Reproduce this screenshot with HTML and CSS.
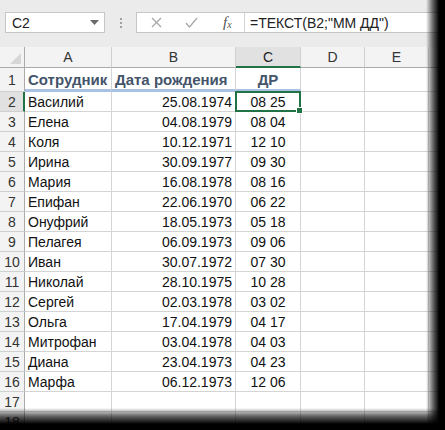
FILE: index.html
```html
<!DOCTYPE html>
<html>
<head>
<meta charset="utf-8">
<link rel="stylesheet" href="styles.css">
</head>
<body>
<div class="screen">
  <div class="toolbar">
    <div class="namebox">
      <span class="nb-text">C2</span>
      <svg class="nb-arrow" width="9" height="5" viewBox="0 0 9 5"><path d="M0 0h9L4.5 5z" fill="#6a6a6a"/></svg>
    </div>
    <div class="grip"><i></i><i></i><i></i></div>
    <div class="fbar">
      <div class="fbtns">
        <svg class="ficon" width="11" height="11" viewBox="0 0 11 11"><path d="M1 1L10 10M10 1L1 10" stroke="#a8a8a8" stroke-width="1.3" fill="none"/></svg>
        <svg class="ficon" width="13" height="11" viewBox="0 0 13 11"><path d="M1 6L4.5 10L12 1" stroke="#a8a8a8" stroke-width="1.3" fill="none"/></svg>
        <span class="fx">f<sub>x</sub></span>
      </div>
      <div class="ftext">=ТЕКСТ(B2;"ММ ДД")</div>
    </div>
  </div>
  <div class="sheet">
    <div class="corner"><svg width="11" height="11" viewBox="0 0 11 11"><path d="M11 0V11H0z" fill="#d7d7d7"/></svg></div>
    <div class="ch">A</div><div class="ch">B</div><div class="ch sel">C</div><div class="ch">D</div><div class="ch">E</div><div class="ch"></div>

    <div class="rh r1">1</div><div class="c hd">Сотрудник</div><div class="c hd">Дата рождения</div><div class="c hd ctr">ДР</div><div class="c r1"></div><div class="c r1"></div><div class="c r1"></div>

    <div class="rh rsel">2</div><div class="c">Василий</div><div class="c num">25.08.1974</div><div class="c ctr active">08 25<span class="handle"></span></div><div class="c"></div><div class="c"></div><div class="c"></div>
    <div class="rh">3</div><div class="c">Елена</div><div class="c num">04.08.1979</div><div class="c ctr">08 04</div><div class="c"></div><div class="c"></div><div class="c"></div>
    <div class="rh">4</div><div class="c">Коля</div><div class="c num">10.12.1971</div><div class="c ctr">12 10</div><div class="c"></div><div class="c"></div><div class="c"></div>
    <div class="rh">5</div><div class="c">Ирина</div><div class="c num">30.09.1977</div><div class="c ctr">09 30</div><div class="c"></div><div class="c"></div><div class="c"></div>
    <div class="rh">6</div><div class="c">Мария</div><div class="c num">16.08.1978</div><div class="c ctr">08 16</div><div class="c"></div><div class="c"></div><div class="c"></div>
    <div class="rh">7</div><div class="c">Епифан</div><div class="c num">22.06.1970</div><div class="c ctr">06 22</div><div class="c"></div><div class="c"></div><div class="c"></div>
    <div class="rh">8</div><div class="c">Онуфрий</div><div class="c num">18.05.1973</div><div class="c ctr">05 18</div><div class="c"></div><div class="c"></div><div class="c"></div>
    <div class="rh">9</div><div class="c">Пелагея</div><div class="c num">06.09.1973</div><div class="c ctr">09 06</div><div class="c"></div><div class="c"></div><div class="c"></div>
    <div class="rh">10</div><div class="c">Иван</div><div class="c num">30.07.1972</div><div class="c ctr">07 30</div><div class="c"></div><div class="c"></div><div class="c"></div>
    <div class="rh">11</div><div class="c">Николай</div><div class="c num">28.10.1975</div><div class="c ctr">10 28</div><div class="c"></div><div class="c"></div><div class="c"></div>
    <div class="rh">12</div><div class="c">Сергей</div><div class="c num">02.03.1978</div><div class="c ctr">03 02</div><div class="c"></div><div class="c"></div><div class="c"></div>
    <div class="rh">13</div><div class="c">Ольга</div><div class="c num">17.04.1979</div><div class="c ctr">04 17</div><div class="c"></div><div class="c"></div><div class="c"></div>
    <div class="rh">14</div><div class="c">Митрофан</div><div class="c num">03.04.1978</div><div class="c ctr">04 03</div><div class="c"></div><div class="c"></div><div class="c"></div>
    <div class="rh">15</div><div class="c">Диана</div><div class="c num">23.04.1973</div><div class="c ctr">04 23</div><div class="c"></div><div class="c"></div><div class="c"></div>
    <div class="rh">16</div><div class="c">Марфа</div><div class="c num">06.12.1973</div><div class="c ctr">12 06</div><div class="c"></div><div class="c"></div><div class="c"></div>
    <div class="rh">17</div><div class="c"></div><div class="c"></div><div class="c"></div><div class="c"></div><div class="c"></div><div class="c"></div>
    <div class="rh">18</div><div class="c"></div><div class="c"></div><div class="c"></div><div class="c"></div><div class="c"></div><div class="c"></div>
  </div>
  <div class="shade-right"></div>
  <div class="shade-bottom"></div>
</div>
</body>
</html>
```
FILE: styles.css
```css
html, body {
  margin: 0;
  padding: 0;
  background: #000;
}
.screen {
  position: relative;
  width: 445px;
  height: 430px;
  overflow: hidden;
  background: #fff;
  font-family: "Liberation Sans", Arial, sans-serif;
}
.toolbar {
  height: 47px;
  box-sizing: border-box;
  background: #ebebeb;
  display: flex;
  align-items: flex-start;
  padding: 12px 0 0 5px;
}
.namebox {
  width: 100px;
  height: 21px;
  box-sizing: border-box;
  background: #fff;
  border: 1px solid #c6c6c6;
  display: flex;
  align-items: center;
  justify-content: space-between;
  padding: 0 5px 0 6px;
}
.nb-text {
  font-size: 14px;
  color: #222;
}
.grip {
  width: 31px;
  height: 21px;
  display: flex;
  flex-direction: column;
  align-items: center;
  justify-content: center;
  gap: 2px;
}
.grip i {
  width: 2px;
  height: 2px;
  background: #a0a0a0;
}
.fbar {
  flex: 1;
  height: 21px;
  box-sizing: border-box;
  background: #fff;
  border: 1px solid #c6c6c6;
  border-right: none;
  display: flex;
  align-items: center;
}
.fbtns {
  width: 108px;
  height: 100%;
  box-sizing: border-box;
  border-right: 1px solid #d4d4d4;
  display: flex;
  align-items: center;
  padding-left: 14px;
  gap: 23px;
}
.fx {
  font-family: "Liberation Serif", serif;
  font-style: italic;
  font-size: 15px;
  color: #555;
  margin-left: 2px;
}
.fx sub {
  font-size: 10px;
  vertical-align: -1px;
}
.ftext {
  padding-left: 5px;
  font-size: 14px;
  color: #222;
  white-space: nowrap;
}
.sheet {
  display: grid;
  grid-template-columns: 25px 87px 124px 65px 64px 64px 40px;
  grid-template-rows: 21px 24px repeat(17, 20px);
  font-size: 14px;
  color: #111;
}
.sheet > div {
  box-sizing: border-box;
  border-right: 1px solid #d4d4d4;
  border-bottom: 1px solid #d4d4d4;
  white-space: nowrap;
  overflow: visible;
  display: flex;
  align-items: center;
}
.sheet > .corner {
  background: #f3f3f3;
  border-right: 1px solid #ababab;
  border-bottom: 1px solid #ababab;
  justify-content: flex-end;
  align-items: flex-end;
  padding: 0 3px 3px 0;
}
.sheet > .ch {
  background: #f3f3f3;
  border-right: 1px solid #d0d0d0;
  border-bottom: 1px solid #ababab;
  justify-content: center;
  color: #333;
  font-size: 14px;
}
.sheet > .ch.sel {
  background: #e1e1e1;
  border-bottom: 2px solid #217346;
  color: #222;
}
.sheet > .rh {
  background: #f3f3f3;
  border-right: 1px solid #ababab;
  border-bottom: 1px solid #d0d0d0;
  justify-content: center;
  color: #333;
}
.sheet > .rh.rsel {
  background: #e1e1e1;
  border-right: 2px solid #217346;
  padding-left: 1px;
}
.c {
  padding: 0 3px;
}
.sheet > .hd {
  font-weight: bold;
  color: #44546a;
  border-bottom: 3px solid #a8c1e4;
  font-size: 15px;
  padding-top: 1px;
}
.num {
  justify-content: flex-end;
}
.sheet > .ctr {
  justify-content: center;
}
.sheet > .active {
  position: relative;
  border: 2px solid #217346;
  margin: -1px 0 0 -1px;
}
.handle {
  position: absolute;
  right: -4px;
  bottom: -4px;
  width: 5px;
  height: 5px;
  background: #217346;
  border: 1px solid #fff;
}
.shade-right {
  position: absolute;
  top: 0;
  right: 0;
  width: 19px;
  height: 100%;
  background: linear-gradient(to right, rgba(0,0,0,0) 0, rgba(0,0,0,0.6) 7px, #000 13px);
}
.shade-bottom {
  position: absolute;
  left: 0;
  bottom: 0;
  width: 100%;
  height: 22px;
  background: linear-gradient(to bottom, rgba(0,0,0,0) 0, rgba(0,0,0,0.6) 8px, #000 16px);
}
```
